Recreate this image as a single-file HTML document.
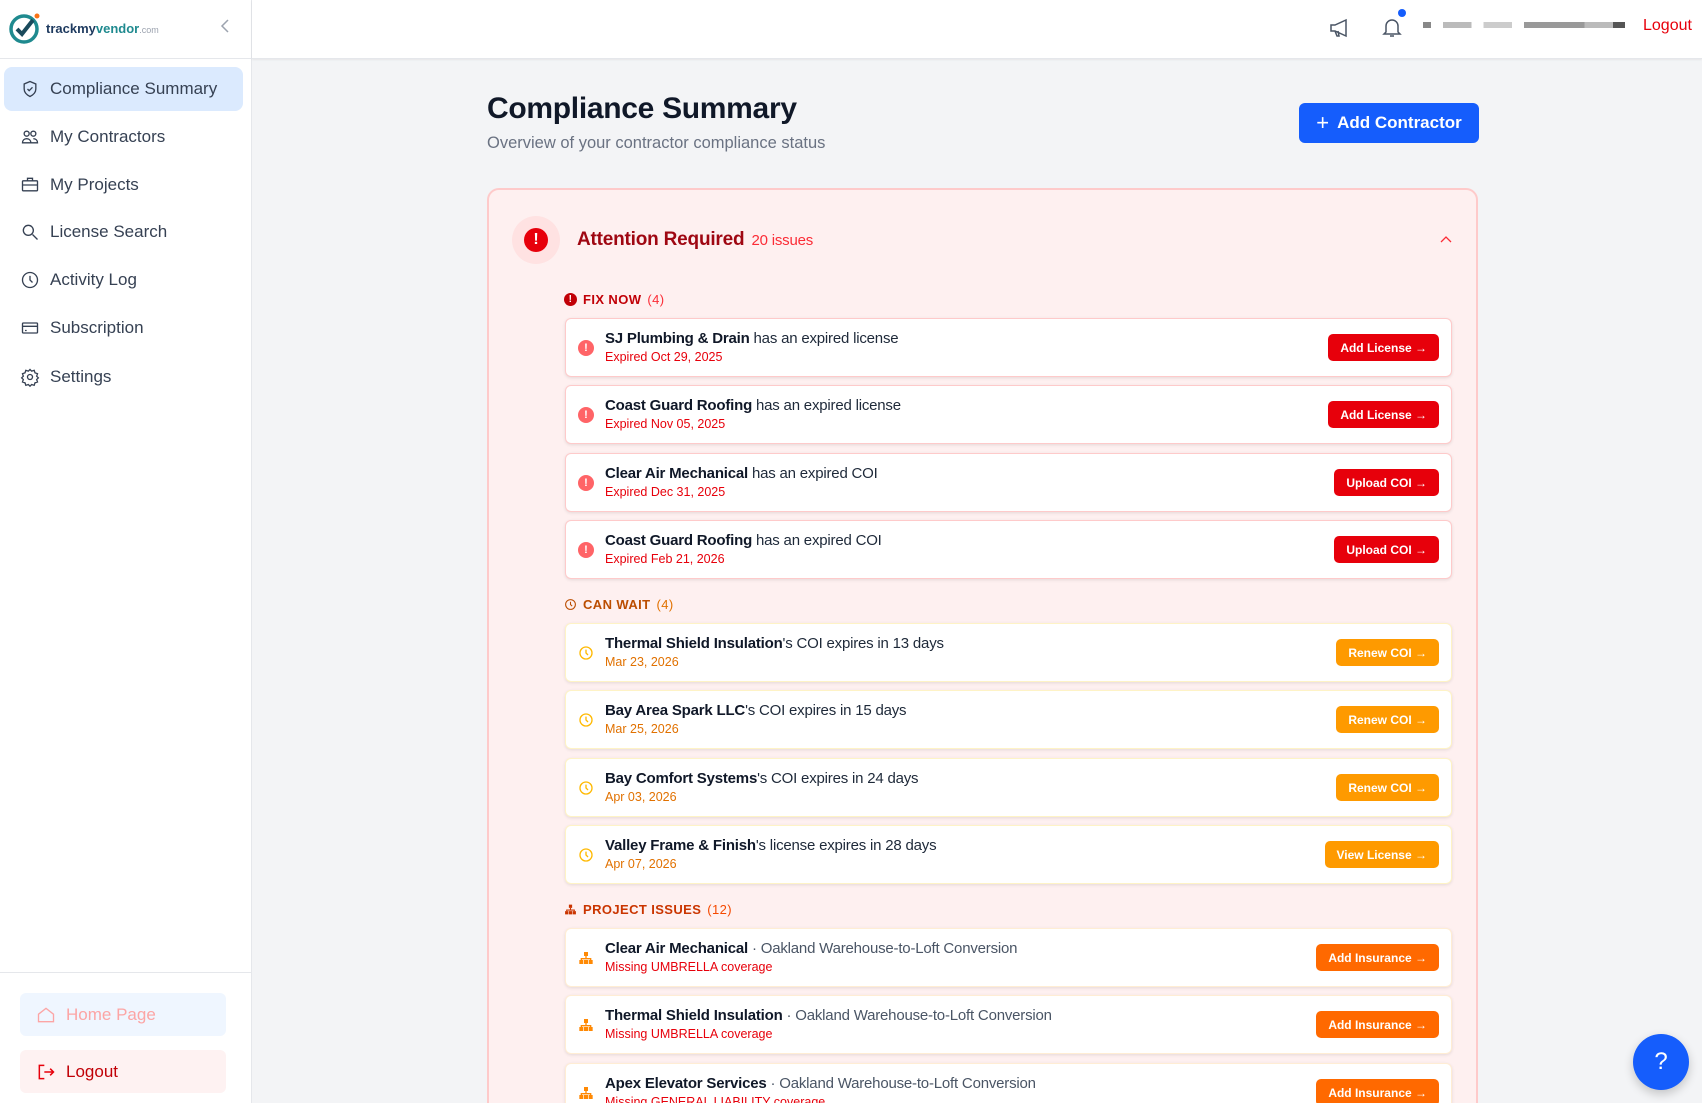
<!DOCTYPE html>
<html><head><meta charset="utf-8">
<style>
*{box-sizing:border-box;margin:0;padding:0}
html,body{width:1702px;height:1103px;overflow:hidden}
body{background:#f3f4f6;font-family:"Liberation Sans",sans-serif;color:#1f2937;position:relative}
#wrap{position:absolute;left:0;top:0;width:1702px;height:1103px;overflow:hidden}
.side{position:absolute;left:0;top:0;width:252px;height:1103px;background:#fff;border-right:1px solid #e5e7eb}
.logo{position:absolute;left:8px;top:10px;height:36px;display:flex;align-items:center;gap:4px}
.nav{position:absolute;left:4px;width:239px;height:44px;border-radius:8px;display:flex;align-items:center;padding-left:16px;font-size:17px;color:#364153}
.nav svg{width:20px;height:20px;margin-right:10px;stroke:#364153;fill:none;stroke-width:1.6}
.nav.act{background:#dbeafe}
.top{position:absolute;left:252px;top:0;right:0;height:59px;background:#fff;border-bottom:1px solid #e5e7eb;box-shadow:0 1px 2px rgba(0,0,0,.06)}
.card{position:absolute;left:487px;top:188px;width:991px;height:930px;background:#fef0f0;border:2px solid #fecaca;border-radius:12px}
.sec{position:absolute;left:564px;font-size:13px;font-weight:bold;letter-spacing:.4px;display:flex;align-items:center;gap:6px}
.row{position:absolute;left:565px;width:887px;height:59px;background:#fff;border-radius:6px;box-shadow:0 1px 3px rgba(0,0,0,.1)}
.row .ic{position:absolute;left:12px;top:21px;width:16px;height:16px}
.row .t{position:absolute;left:39px;top:11px;font-size:15px;color:#1e2939;white-space:nowrap;letter-spacing:-.2px}
.row .t b{color:#101828}
.row .s{position:absolute;left:39px;top:31px;font-size:12.5px}
.row .btn{position:absolute;right:12px;top:15px;height:27px;border-radius:5px;color:#fff;font-size:12px;font-weight:bold;padding:0 12px;display:flex;align-items:center}
.red .btn{background:#e7000b}.red .s{color:#e7000b}.red{border:1px solid #fecaca}
.amb .btn{background:#fe9a00}.amb .s{color:#e17100}.amb{border:1px solid #fef3c6}
.org .btn{background:#ff6900}.org .s{color:#e7000b}.org{border:1px solid #ffedd4}
.gray{color:#4a5565}
</style></head><body><div id="wrap">
<div class="side">
 <div class="logo">
  <svg width="34" height="34" viewBox="0 0 34 34"><circle cx="16" cy="18" r="13" fill="none" stroke="#1f8a8f" stroke-width="3.5"/><path d="M9 18l5 5 11-14" fill="none" stroke="#1a4a5c" stroke-width="4"/><circle cx="29" cy="5" r="2.5" fill="#f97316"/></svg>
  <span style="font-size:13px;font-weight:bold;color:#1e3a5f">trackmy<span style="color:#1f8a8f">vendor</span><span style="font-size:9px;color:#9ca3af;font-weight:normal">.com</span></span>
 </div>
 <svg style="position:absolute;left:219px;top:18px" width="12" height="16" viewBox="0 0 12 16"><path d="M9 2L3 8l6 6" fill="none" stroke="#9ca3af" stroke-width="1.5"/></svg>
 <div style="position:absolute;left:0;top:58px;width:252px;border-top:1px solid #e5e7eb"></div>
 <div class="nav act" style="top:67px"><svg viewBox="0 0 24 24"><path d="M12 3l7 3v6c0 4-3 7-7 9-4-2-7-5-7-9V6z"/><path d="M9 12l2 2 4-4"/></svg>Compliance Summary</div>
 <div class="nav" style="top:115px"><svg viewBox="0 0 24 24"><circle cx="8" cy="8" r="3"/><circle cx="16" cy="8" r="3"/><path d="M3 19c0-3 2-5 5-5s5 2 5 5zM13 19h8c0-3-2-5-5-5"/></svg>My Contractors</div>
 <div class="nav" style="top:163px"><svg viewBox="0 0 24 24"><rect x="3" y="7" width="18" height="12" rx="1"/><path d="M9 7V4h6v3M3 12h18"/></svg>My Projects</div>
 <div class="nav" style="top:210px"><svg viewBox="0 0 24 24"><circle cx="10" cy="10" r="6"/><path d="M15 15l6 6"/></svg>License Search</div>
 <div class="nav" style="top:258px"><svg viewBox="0 0 24 24"><circle cx="12" cy="12" r="9"/><path d="M12 7v5l3 3"/></svg>Activity Log</div>
 <div class="nav" style="top:306px"><svg viewBox="0 0 24 24"><rect x="3" y="6" width="18" height="12" rx="1"/><path d="M3 10h18M6 15h2"/></svg>Subscription</div>
 <div class="nav" style="top:355px"><svg viewBox="0 0 24 24"><circle cx="12" cy="12" r="3"/><path d="M12 3l2 2 3-1 1 3 3 1-1 3 2 2-2 2 1 3-3 1-1 3-3-1-2 2-2-2-3 1-1-3-3-1 1-3-2-2 2-2-1-3 3-1 1-3 3 1z"/></svg>Settings</div>
 <div style="position:absolute;left:0;top:972px;width:252px;border-top:1px solid #e5e7eb"></div>
 <div style="position:absolute;left:20px;top:993px;width:206px;height:43px;background:#eff6ff;border-radius:6px;display:flex;align-items:center;padding-left:16px;font-size:17px;color:#fca5a5"><svg width="20" height="20" viewBox="0 0 24 24" style="margin-right:10px" fill="none" stroke="#fca5a5" stroke-width="1.6"><path d="M3 11l9-7 9 7v9H3z"/></svg>Home Page</div>
 <div style="position:absolute;left:20px;top:1050px;width:206px;height:43px;background:#fef2f2;border-radius:6px;display:flex;align-items:center;padding-left:16px;font-size:17px;color:#c10007"><svg width="20" height="20" viewBox="0 0 24 24" style="margin-right:10px" fill="none" stroke="#e7000b" stroke-width="1.8"><path d="M10 4H4v16h6M10 12h11M17 8l4 4-4 4"/></svg>Logout</div>
</div>
<div class="top">
 <svg style="position:absolute;left:1076px;top:16px" width="24" height="24" viewBox="0 0 24 24" fill="none" stroke="#4a5565" stroke-width="1.5"><path d="M3 9h4l11-5v16L7 15H3zM7 15l2 5h2l-1-5"/></svg>
 <svg style="position:absolute;left:1128px;top:15px" width="24" height="24" viewBox="0 0 24 24" fill="none" stroke="#4a5565" stroke-width="1.5"><path d="M6 17V11a6 6 0 0112 0v6l2 2H4zM10 21h4"/></svg>
 <div style="position:absolute;left:1146px;top:9px;width:8px;height:8px;border-radius:50%;background:#155dfc"></div>
 <div style="position:absolute;left:1171px;top:22px;width:202px;height:6px;background:linear-gradient(90deg,#888 0 4%,#fff 4% 10%,#bbb 10% 24%,#fff 24% 30%,#ccc 30% 44%,#fff 44% 50%,#999 50% 80%,#bbb 80% 94%,#555 94%)"></div>
 <div style="position:absolute;left:1391px;top:17px;font-size:16px;color:#e7000b">Logout</div>
</div>
<div style="position:absolute;left:487px;top:92px;font-size:30px;font-weight:bold;color:#101828;letter-spacing:-.3px">Compliance Summary</div>
<div style="position:absolute;left:487px;top:134px;font-size:16.5px;color:#6a7282">Overview of your contractor compliance status</div>
<div style="position:absolute;left:1299px;top:103px;width:180px;height:40px;background:#155dfc;border-radius:6px;color:#fff;font-size:17px;font-weight:bold;display:flex;align-items:center;justify-content:center;gap:8px"><span style="font-weight:normal;font-size:22px">+</span>Add Contractor</div>
<div class="card"></div>
<div style="position:absolute;left:512px;top:216px;width:48px;height:48px;border-radius:50%;background:#ffe2e2"></div>
<div style="position:absolute;left:524px;top:228px;width:24px;height:24px;border-radius:50%;background:#e7000b;color:#fff;font-weight:bold;font-size:16px;text-align:center;line-height:24px">!</div>
<div style="position:absolute;left:577px;top:229px;font-size:19px;font-weight:bold;color:#9f0712;letter-spacing:-.2px">Attention Required <span style="font-size:15px;font-weight:normal;color:#fb2c36;margin-left:2px">20 issues</span></div>
<svg style="position:absolute;left:1439px;top:234px" width="14" height="10" viewBox="0 0 14 10"><path d="M2 8l5-5 5 5" fill="none" stroke="#fb2c36" stroke-width="1.3"/></svg>

<div class="sec" style="top:292px;color:#c10007"><span style="width:13px;height:13px;border-radius:50%;background:#c10007;color:#fff;font-size:10px;text-align:center;line-height:13px">!</span>FIX NOW <span style="font-weight:normal;color:#fb2c36">(4)</span></div>
<div class="row red" style="top:318px"><span class="ic" style="border-radius:50%;background:#ff6467;color:#fff;font-size:11px;font-weight:bold;text-align:center;line-height:16px">!</span><div class="t"><b>SJ Plumbing &amp; Drain</b> has an expired license</div><div class="s">Expired Oct 29, 2025</div><div class="btn">Add License →</div></div>
<div class="row red" style="top:385px"><span class="ic" style="border-radius:50%;background:#ff6467;color:#fff;font-size:11px;font-weight:bold;text-align:center;line-height:16px">!</span><div class="t"><b>Coast Guard Roofing</b> has an expired license</div><div class="s">Expired Nov 05, 2025</div><div class="btn">Add License →</div></div>
<div class="row red" style="top:453px"><span class="ic" style="border-radius:50%;background:#ff6467;color:#fff;font-size:11px;font-weight:bold;text-align:center;line-height:16px">!</span><div class="t"><b>Clear Air Mechanical</b> has an expired COI</div><div class="s">Expired Dec 31, 2025</div><div class="btn">Upload COI →</div></div>
<div class="row red" style="top:520px"><span class="ic" style="border-radius:50%;background:#ff6467;color:#fff;font-size:11px;font-weight:bold;text-align:center;line-height:16px">!</span><div class="t"><b>Coast Guard Roofing</b> has an expired COI</div><div class="s">Expired Feb 21, 2026</div><div class="btn">Upload COI →</div></div>

<div class="sec" style="top:597px;color:#bb4d00"><svg width="13" height="13" viewBox="0 0 24 24" fill="none" stroke="#bb4d00" stroke-width="2"><circle cx="12" cy="12" r="9"/><path d="M12 7v5l3 3"/></svg>CAN WAIT <span style="font-weight:normal;color:#e17100">(4)</span></div>
<div class="row amb" style="top:623px"><svg class="ic" viewBox="0 0 24 24" fill="none" stroke="#ffb900" stroke-width="2"><circle cx="12" cy="12" r="9"/><path d="M12 7v5l3 3"/></svg><div class="t"><b>Thermal Shield Insulation</b>'s COI expires in 13 days</div><div class="s">Mar 23, 2026</div><div class="btn">Renew COI →</div></div>
<div class="row amb" style="top:690px"><svg class="ic" viewBox="0 0 24 24" fill="none" stroke="#ffb900" stroke-width="2"><circle cx="12" cy="12" r="9"/><path d="M12 7v5l3 3"/></svg><div class="t"><b>Bay Area Spark LLC</b>'s COI expires in 15 days</div><div class="s">Mar 25, 2026</div><div class="btn">Renew COI →</div></div>
<div class="row amb" style="top:758px"><svg class="ic" viewBox="0 0 24 24" fill="none" stroke="#ffb900" stroke-width="2"><circle cx="12" cy="12" r="9"/><path d="M12 7v5l3 3"/></svg><div class="t"><b>Bay Comfort Systems</b>'s COI expires in 24 days</div><div class="s">Apr 03, 2026</div><div class="btn">Renew COI →</div></div>
<div class="row amb" style="top:825px"><svg class="ic" viewBox="0 0 24 24" fill="none" stroke="#ffb900" stroke-width="2"><circle cx="12" cy="12" r="9"/><path d="M12 7v5l3 3"/></svg><div class="t"><b>Valley Frame &amp; Finish</b>'s license expires in 28 days</div><div class="s">Apr 07, 2026</div><div class="btn">View License →</div></div>

<div class="sec" style="top:902px;color:#ca3500"><svg width="13" height="13" viewBox="0 0 24 24" fill="#ca3500"><rect x="9" y="3" width="6" height="6"/><rect x="2" y="15" width="6" height="6"/><rect x="9" y="15" width="6" height="6"/><rect x="16" y="15" width="6" height="6"/><path d="M11 9h2v3h7v3h-2v-1H6v1H4v-3h7z"/></svg>PROJECT ISSUES <span style="font-weight:normal;color:#f54900">(12)</span></div>
<div class="row org" style="top:928px"><svg class="ic" viewBox="0 0 24 24" fill="#ff8904"><rect x="9" y="3" width="6" height="6"/><rect x="2" y="15" width="6" height="6"/><rect x="9" y="15" width="6" height="6"/><rect x="16" y="15" width="6" height="6"/><path d="M11 9h2v3h7v3h-2v-1H6v1H4v-3h7z"/></svg><div class="t"><b>Clear Air Mechanical</b> <span class="gray">· Oakland Warehouse-to-Loft Conversion</span></div><div class="s">Missing UMBRELLA coverage</div><div class="btn">Add Insurance →</div></div>
<div class="row org" style="top:995px"><svg class="ic" viewBox="0 0 24 24" fill="#ff8904"><rect x="9" y="3" width="6" height="6"/><rect x="2" y="15" width="6" height="6"/><rect x="9" y="15" width="6" height="6"/><rect x="16" y="15" width="6" height="6"/><path d="M11 9h2v3h7v3h-2v-1H6v1H4v-3h7z"/></svg><div class="t"><b>Thermal Shield Insulation</b> <span class="gray">· Oakland Warehouse-to-Loft Conversion</span></div><div class="s">Missing UMBRELLA coverage</div><div class="btn">Add Insurance →</div></div>
<div class="row org" style="top:1063px"><svg class="ic" viewBox="0 0 24 24" fill="#ff8904"><rect x="9" y="3" width="6" height="6"/><rect x="2" y="15" width="6" height="6"/><rect x="9" y="15" width="6" height="6"/><rect x="16" y="15" width="6" height="6"/><path d="M11 9h2v3h7v3h-2v-1H6v1H4v-3h7z"/></svg><div class="t"><b>Apex Elevator Services</b> <span class="gray">· Oakland Warehouse-to-Loft Conversion</span></div><div class="s">Missing GENERAL LIABILITY coverage</div><div class="btn">Add Insurance →</div></div>

<div style="position:absolute;left:1633px;top:1034px;width:56px;height:56px;border-radius:50%;background:#155dfc;color:#fff;font-size:24px;text-align:center;line-height:56px;box-shadow:0 4px 10px rgba(0,0,0,.2)">?</div>
</div></body></html>
